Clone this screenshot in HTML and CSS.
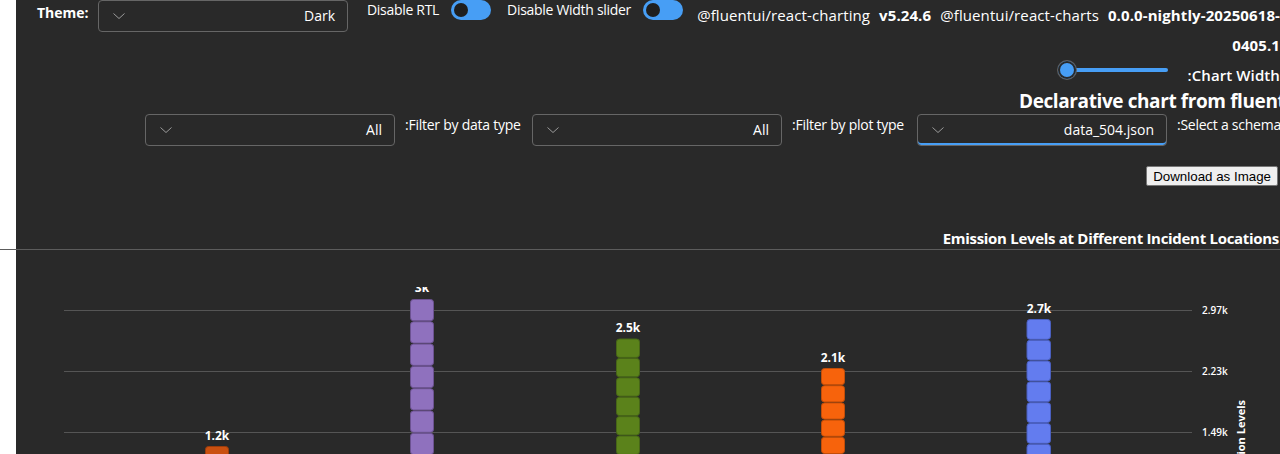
FILE: index.html
```html
<!DOCTYPE html>
<html lang="en">
<head>
<meta charset="utf-8">
<title>Declarative chart</title>
<link rel="stylesheet" href="styles.css">
</head>
<body>
<div class="page">
  <div class="top-row">
    <span class="theme-label">Theme:</span>
    <div class="dropdown">
      <svg class="chev" width="12" height="6" viewBox="0 0 12 6"><path d="M0.5 0.5 L6 5.5 L11.5 0.5" /></svg>
      <span class="dd-value">Dark</span>
    </div>
    <span class="switch-label first">Disable RTL</span>
    <span class="toggle"><span class="thumb"></span></span>
    <span class="switch-label">Disable Width slider</span>
    <span class="toggle"><span class="thumb"></span></span>
    <div class="versions"><span class="pkg">@fluentui/react-charting</span><b class="ver">v5.24.6</b><span class="pkg">@fluentui/react-charts</span><b class="ver last">0.0.0-nightly-20250618-<br>0405.1</b></div>
  </div>

  <div class="slider-row">
    <div class="slider"><span class="slider-track"></span><span class="slider-thumb"></span></div>
    <span class="slider-label">:Chart Width</span>
  </div>

  <div class="heading-row">
    <h1 class="heading">Declarative chart from fluentui/react-charts</h1>
  </div>

  <div class="filter-row">
    <div class="dropdown">
      <svg class="chev" width="12" height="6" viewBox="0 0 12 6"><path d="M0.5 0.5 L6 5.5 L11.5 0.5" /></svg>
      <span class="dd-value">All</span>
    </div>
    <span class="filter-label w1">:Filter by data type</span>
    <div class="dropdown">
      <svg class="chev" width="12" height="6" viewBox="0 0 12 6"><path d="M0.5 0.5 L6 5.5 L11.5 0.5" /></svg>
      <span class="dd-value">All</span>
    </div>
    <span class="filter-label w2">:Filter by plot type</span>
    <div class="dropdown focused">
      <svg class="chev" width="12" height="6" viewBox="0 0 12 6"><path d="M0.5 0.5 L6 5.5 L11.5 0.5" /></svg>
      <span class="dd-value">data_504.json</span>
    </div>
    <span class="filter-label">:Select a schema</span>
  </div>

  <div class="download-row">
    <button class="download-btn" type="button">Download as Image</button>
  </div>

  <div class="title-row">
    <span class="chart-title">Emission Levels at Different Incident Locations</span>
  </div>

  <div class="divider"></div>

  <svg class="chart" width="1264" height="204" viewBox="16 250 1264 204">
    <defs>
      <clipPath id="plot"><rect x="16" y="287" width="1264" height="170"/></clipPath>
    </defs>
    <g class="grid">
      <line x1="64" y1="310.5" x2="1192" y2="310.5"/>
      <line x1="64" y1="371.5" x2="1192" y2="371.5"/>
      <line x1="64" y1="432.5" x2="1192" y2="432.5"/>
    </g>
    <g class="ytick">
      <text x="1202" y="314">2.97k</text>
      <text x="1202" y="375">2.23k</text>
      <text x="1202" y="436">1.49k</text>
    </g>
    <text class="ytitle" transform="translate(1245,400) rotate(-90)" text-anchor="end">Emission Levels</text>
    <g clip-path="url(#plot)">
      <g class="bar b-rust">
        <rect x="205.5" y="446.5" width="23" height="19" rx="3"/>
      </g>
      <text class="blabel" x="217" y="440">1.2k</text>

      <g class="bar b-purple">
        <rect x="410.5" y="299.5" width="23" height="21.3" rx="3"/>
        <rect x="410.5" y="321.8" width="23" height="21.3" rx="3"/>
        <rect x="410.5" y="344.1" width="23" height="21.3" rx="3"/>
        <rect x="410.5" y="366.4" width="23" height="21.3" rx="3"/>
        <rect x="410.5" y="388.7" width="23" height="21.3" rx="3"/>
        <rect x="410.5" y="411.0" width="23" height="21.3" rx="3"/>
        <rect x="410.5" y="433.3" width="23" height="21.3" rx="3"/>
      </g>
      <text class="blabel" x="422" y="292">3k</text>

      <g class="bar b-green">
        <rect x="616.5" y="339" width="23" height="18.4" rx="3"/>
        <rect x="616.5" y="358.4" width="23" height="18.4" rx="3"/>
        <rect x="616.5" y="377.8" width="23" height="18.4" rx="3"/>
        <rect x="616.5" y="397.2" width="23" height="18.4" rx="3"/>
        <rect x="616.5" y="416.6" width="23" height="18.4" rx="3"/>
        <rect x="616.5" y="436.0" width="23" height="18.4" rx="3"/>
      </g>
      <text class="blabel" x="628" y="331.5">2.5k</text>

      <g class="bar b-orange">
        <rect x="821.5" y="368.5" width="23" height="16.2" rx="3"/>
        <rect x="821.5" y="385.7" width="23" height="16.2" rx="3"/>
        <rect x="821.5" y="402.9" width="23" height="16.2" rx="3"/>
        <rect x="821.5" y="420.1" width="23" height="16.2" rx="3"/>
        <rect x="821.5" y="437.3" width="23" height="16.2" rx="3"/>
      </g>
      <text class="blabel" x="833" y="361.5">2.1k</text>

      <g class="bar b-blue">
        <rect x="1027" y="319.5" width="23.5" height="19.8" rx="3"/>
        <rect x="1027" y="340.3" width="23.5" height="19.8" rx="3"/>
        <rect x="1027" y="361.1" width="23.5" height="19.8" rx="3"/>
        <rect x="1027" y="381.9" width="23.5" height="19.8" rx="3"/>
        <rect x="1027" y="402.7" width="23.5" height="19.8" rx="3"/>
        <rect x="1027" y="423.5" width="23.5" height="19.8" rx="3"/>
        <rect x="1027" y="444.3" width="23.5" height="19.8" rx="3"/>
      </g>
      <text class="blabel" x="1039" y="312.5">2.7k</text>
    </g>
  </svg>
</div>
</body>
</html>
```

FILE: styles.css
```css
* { box-sizing: border-box; }

html, body {
  margin: 0;
  height: 454px;
  overflow: hidden;
  background: #ffffff;
}

.page {
  margin-left: 16px;
  width: 1264px;
  height: 454px;
  background: #292929;
  color: #ffffff;
  font-family: "Open Sans", "Noto Sans", sans-serif;
  font-size: 14px;
}

/* ---------- top row ---------- */
.top-row {
  display: flex;
  align-items: flex-start;
  height: 60px;
}

.theme-label {
  width: 61px;
  margin-left: 21px;
  font-weight: 700;
  line-height: 25px;
  flex-shrink: 0;
}

.dropdown {
  width: 250px;
  height: 32px;
  flex-shrink: 0;
  border: 1px solid #666666;
  border-radius: 4px;
  display: flex;
  align-items: center;
  justify-content: space-between;
  padding: 0 12px 0 14px;
}

.dropdown.focused {
  box-shadow: inset 0 -2px 0 #479ef5;
}

.chev path {
  fill: none;
  stroke: #9a9a9a;
  stroke-width: 1;
}

.dd-value {
  font-size: 14px;
  line-height: 20px;
  white-space: nowrap;
}

.switch-label {
  line-height: 20px;
  margin-left: 16px;
  white-space: nowrap;
  letter-spacing: -0.3px;
}

.switch-label.first { margin-left: 19px; }

.toggle {
  width: 40px;
  height: 20px;
  flex-shrink: 0;
  margin-left: 12px;
  border-radius: 10px;
  background: #479ef5;
  display: flex;
  align-items: center;
  padding-left: 3px;
}

.thumb {
  width: 14px;
  height: 14px;
  border-radius: 50%;
  background: #1f1f1f;
}

.versions {
  flex: 1;
  min-width: 0;
  margin-left: 14px;
  text-align: right;
  font-size: 15px;
  line-height: 30px;
  white-space: nowrap;
  letter-spacing: 0.1px;
}

.versions .pkg,
.versions .ver { margin-right: 9px; }
.versions .ver { font-weight: 700; }
.versions .ver.last { margin-right: 0; }

/* ---------- slider ---------- */
.slider-row {
  display: flex;
  justify-content: flex-end;
  align-items: flex-start;
  height: 30px;
}

.slider {
  position: relative;
  width: 113px;
  height: 20px;
}

.slider-track {
  position: absolute;
  left: 10px;
  right: 2px;
  top: 8px;
  height: 4px;
  border-radius: 2px;
  background: #479ef5;
}

.slider-thumb {
  position: absolute;
  left: 1px;
  top: 1px;
  width: 18px;
  height: 18px;
  border-radius: 50%;
  background: #479ef5;
  box-shadow: inset 0 0 0 2px #292929, 0 0 0 1px #616161;
}

.slider-label {
  margin-left: 17px;
  margin-top: 5px;
  font-size: 15px;
  font-weight: 600;
  line-height: 20px;
  white-space: nowrap;
  letter-spacing: 0.1px;
}

/* ---------- heading ---------- */
.heading-row {
  display: flex;
  justify-content: flex-end;
  height: 24px;
}

.heading {
  margin: 0;
  width: 261px;
  overflow: hidden;
  white-space: nowrap;
  font-size: 19px;
  font-weight: 700;
  line-height: 22px;
  letter-spacing: -0.4px;
}

/* ---------- filters ---------- */
.filter-row {
  display: flex;
  align-items: flex-start;
  gap: 10px;
  padding-left: 129px;
  height: 32px;
}

.filter-label {
  line-height: 22px;
  white-space: nowrap;
  flex-shrink: 0;
  letter-spacing: -0.25px;
}

.filter-label.w1 { width: 117px; }
.filter-label.w2 { width: 115px; }

/* ---------- download ---------- */
.download-row {
  display: flex;
  justify-content: flex-end;
  margin-top: 20px;
  padding-right: 2px;
}

.download-btn {
  height: 20px;
  padding: 0 6px;
  font-family: "Liberation Sans", Arial, sans-serif;
  font-size: 13.333px;
  color: #000000;
  background: #efefef;
  border: 1px solid #767676;
  border-radius: 2px;
}

/* ---------- chart ---------- */
.title-row {
  display: flex;
  justify-content: flex-end;
  margin-top: 42px;
  padding-right: 1px;
  height: 20px;
}

.chart-title {
  font-size: 15px;
  font-weight: 700;
  line-height: 20px;
  white-space: nowrap;
  letter-spacing: -0.3px;
}

.divider {
  margin-top: 1px;
  margin-left: -16px;
  width: 1296px;
  height: 1px;
  background: #5c5c5c;
}

.chart {
  display: block;
  font-family: "Open Sans", "Noto Sans", sans-serif;
}

.grid line {
  stroke: #555555;
  stroke-width: 1;
}

.ytick text {
  fill: #ffffff;
  font-size: 10px;
  font-weight: 600;
}

.ytitle {
  fill: #ffffff;
  font-size: 11px;
  font-weight: 700;
}

.blabel {
  fill: #ffffff;
  font-size: 12px;
  font-weight: 700;
  text-anchor: middle;
}

.bar rect { stroke-width: 1; }
.b-rust rect   { fill: #ca5010; stroke: #9c3d0b; }
.b-purple rect { fill: #8f71be; stroke: #6c5291; }
.b-green rect  { fill: #5b821b; stroke: #476617; }
.b-orange rect { fill: #f7630c; stroke: #c24d08; }
.b-blue rect   { fill: #637cef; stroke: #4a5fc0; }
```
